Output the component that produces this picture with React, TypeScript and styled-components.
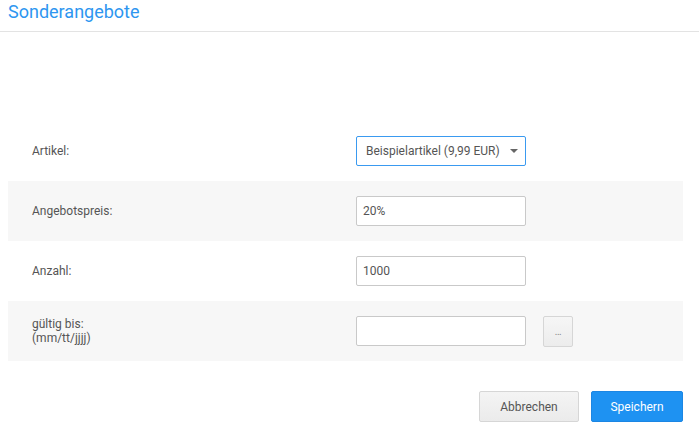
import styled, { createGlobalStyle } from 'styled-components';

const GlobalStyle = createGlobalStyle`
  html, body {
    margin: 0;
    padding: 0;
    background: #fff;
    font-family: Roboto, 'Liberation Sans', Arial, sans-serif;
  }
`;

const Page = styled.div`
  width: 699px;
  height: 437px;
  display: flex;
  flex-direction: column;
  box-sizing: border-box;
`;

const Header = styled.div`
  height: 31px;
  border-bottom: 1px solid #e3e3e3;
  padding: 0 8px;
  display: flex;
  align-items: center;
`;

const Title = styled.h1`
  margin: 0;
  font-size: 18px;
  font-weight: 400;
  color: #2d96f0;
  line-height: 24px;
  margin-top: -7px;
`;

const Form = styled.div`
  padding: 89px 16px 0 8px;
  display: flex;
  flex-direction: column;
`;

const Row = styled.div<{ $shaded?: boolean }>`
  height: 60px;
  display: flex;
  align-items: center;
  padding-left: 24px;
  background: ${(p) => (p.$shaded ? '#f7f7f7' : '#fff')};
`;

const Label = styled.div`
  width: 324px;
  font-size: 12px;
  line-height: 14px;
  color: #555;
`;

const Field = styled.div`
  display: flex;
  align-items: center;
  gap: 17px;
`;

const Input = styled.div<{ $active?: boolean }>`
  box-sizing: border-box;
  width: 170px;
  height: 30px;
  border: 1px solid ${(p) => (p.$active ? '#3a9af0' : '#c9c9c9')};
  border-radius: 2px;
  background: #fff;
  display: flex;
  align-items: center;
  justify-content: space-between;
  padding: 0 6px 0 6px;
  font-size: 12px;
  color: #555;
  white-space: nowrap;
`;

const SelectText = styled.span`
  padding-left: 3px;
`;

const Caret = styled.span`
  width: 0;
  height: 0;
  margin-right: 1px;
  border-left: 4px solid transparent;
  border-right: 4px solid transparent;
  border-top: 4px solid #666;
`;

const DotsButton = styled.div`
  box-sizing: border-box;
  width: 30px;
  height: 31px;
  border: 1px solid #d6d6d6;
  border-radius: 2px;
  background: linear-gradient(#f6f6f6, #ececec);
  display: flex;
  align-items: center;
  justify-content: center;
  font-size: 10px;
  color: #888;
  letter-spacing: -0.5px;
`;

const Footer = styled.div`
  display: flex;
  justify-content: flex-end;
  gap: 12px;
  padding: 30px 16px 0 0;
`;

const Button = styled.div<{ $primary?: boolean }>`
  box-sizing: border-box;
  height: 31px;
  display: flex;
  align-items: center;
  justify-content: center;
  font-size: 12px;
  border-radius: 2px;
  border: 1px solid ${(p) => (p.$primary ? '#1c86e3' : '#d6d6d6')};
  background: ${(p) => (p.$primary ? '#1e92f2' : 'linear-gradient(#f4f4f4, #ebebeb)')};
  color: ${(p) => (p.$primary ? '#fff' : '#555')};
`;

export default function App() {
  return (
    <Page>
      <GlobalStyle />
      <Header>
        <Title>Sonderangebote</Title>
      </Header>
      <Form>
        <Row>
          <Label>Artikel:</Label>
          <Input $active>
            <SelectText>Beispielartikel (9,99 EUR)</SelectText>
            <Caret />
          </Input>
        </Row>
        <Row $shaded>
          <Label>Angebotspreis:</Label>
          <Input>20%</Input>
        </Row>
        <Row>
          <Label>Anzahl:</Label>
          <Input>1000</Input>
        </Row>
        <Row $shaded>
          <Label>
            gültig bis:
            <br />
            (mm/tt/jjjj)
          </Label>
          <Field>
            <Input />
            <DotsButton>...</DotsButton>
          </Field>
        </Row>
      </Form>
      <Footer>
        <Button style={{ width: 100 }}>Abbrechen</Button>
        <Button $primary style={{ width: 92 }}>
          Speichern
        </Button>
      </Footer>
    </Page>
  );
}
